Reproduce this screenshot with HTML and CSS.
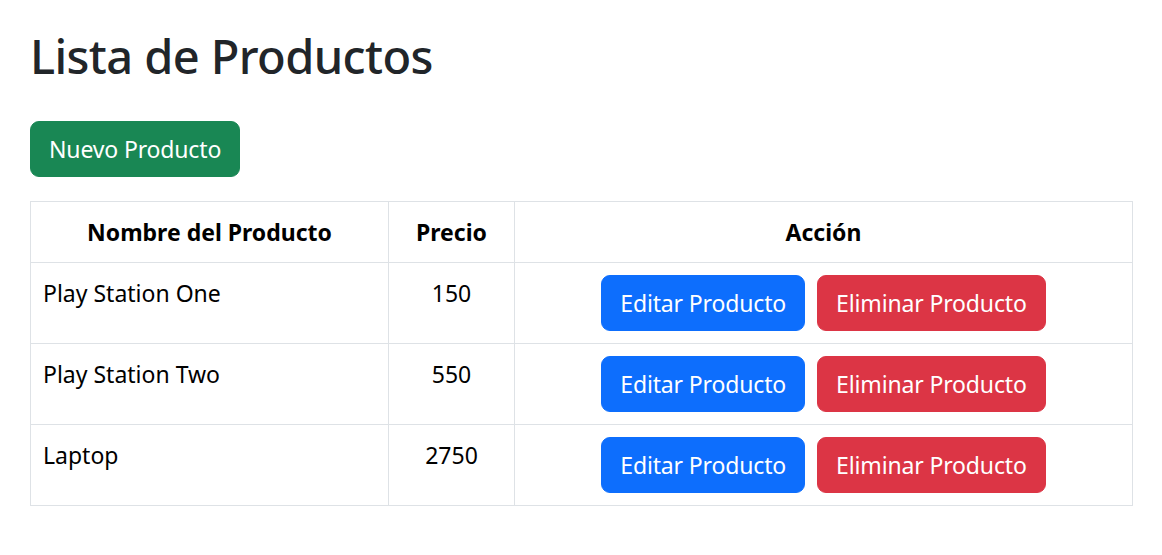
FILE: index.html
```html
<!DOCTYPE html>
<html lang="es">
<head>
<meta charset="utf-8">
<title>Lista de Productos</title>
<link rel="stylesheet" href="styles.css">
</head>
<body>
<div class="container">
  <h1 class="title">Lista de Productos</h1>
  <a class="btn btn-success btn-new" href="#">Nuevo Producto</a>
  <table class="table">
    <thead>
      <tr>
        <th class="col-name">Nombre del Producto</th>
        <th class="col-price">Precio</th>
        <th class="col-action">Acción</th>
      </tr>
    </thead>
    <tbody>
      <tr>
        <td>Play Station One</td>
        <td class="center">150</td>
        <td class="center"><div class="actions"><a class="btn btn-primary" href="#">Editar Producto</a><a class="btn btn-danger" href="#">Eliminar Producto</a></div></td>
      </tr>
      <tr>
        <td>Play Station Two</td>
        <td class="center">550</td>
        <td class="center"><div class="actions"><a class="btn btn-primary" href="#">Editar Producto</a><a class="btn btn-danger" href="#">Eliminar Producto</a></div></td>
      </tr>
      <tr>
        <td>Laptop</td>
        <td class="center">2750</td>
        <td class="center"><div class="actions"><a class="btn btn-primary" href="#">Editar Producto</a><a class="btn btn-danger" href="#">Eliminar Producto</a></div></td>
      </tr>
    </tbody>
  </table>
</div>
</body>
</html>
```
FILE: styles.css
```css
* { box-sizing: border-box; }
html, body {
  margin: 0;
  padding: 0;
  background: #fff;
}
body {
  font-family: "Noto Sans", "Open Sans", sans-serif;
  font-size: 23px;
  line-height: 36px;
  color: #212529;
}
.container {
  padding: 26px 29px 24px 30px;
}
.title {
  margin: 0 0 12px;
  font-size: 47px;
  font-weight: 500;
  line-height: 60.5px;
  letter-spacing: -0.6px;
  color: #212529;
}
.btn {
  display: inline-block;
  padding: 9px 18px;
  font-size: 23px;
  line-height: 36px;
  letter-spacing: -0.15px;
  border: 1.5px solid transparent;
  border-radius: 9px;
  color: #fff;
  text-decoration: none;
  white-space: nowrap;
}
.btn-success { background: #198754; border-color: #198754; }
.btn-primary { background: #0d6efd; border-color: #0d6efd; }
.btn-danger { background: #dc3545; border-color: #dc3545; }
.btn-new {
  margin-top: 22px;
  margin-bottom: 24px;
}
.table {
  width: 100%;
  border-collapse: collapse;
  color: #000;
}
.table th, .table td {
  border: 1px solid #dee2e6;
  padding: 12px;
  vertical-align: top;
  text-align: left;
}
.table th {
  font-weight: 700;
  text-align: center;
  vertical-align: middle;
}
.col-name { width: 358px; }
.col-price { width: 126px; }
.table td.center { text-align: center; }
.actions {
  display: flex;
  justify-content: center;
  gap: 12px;
}
```
